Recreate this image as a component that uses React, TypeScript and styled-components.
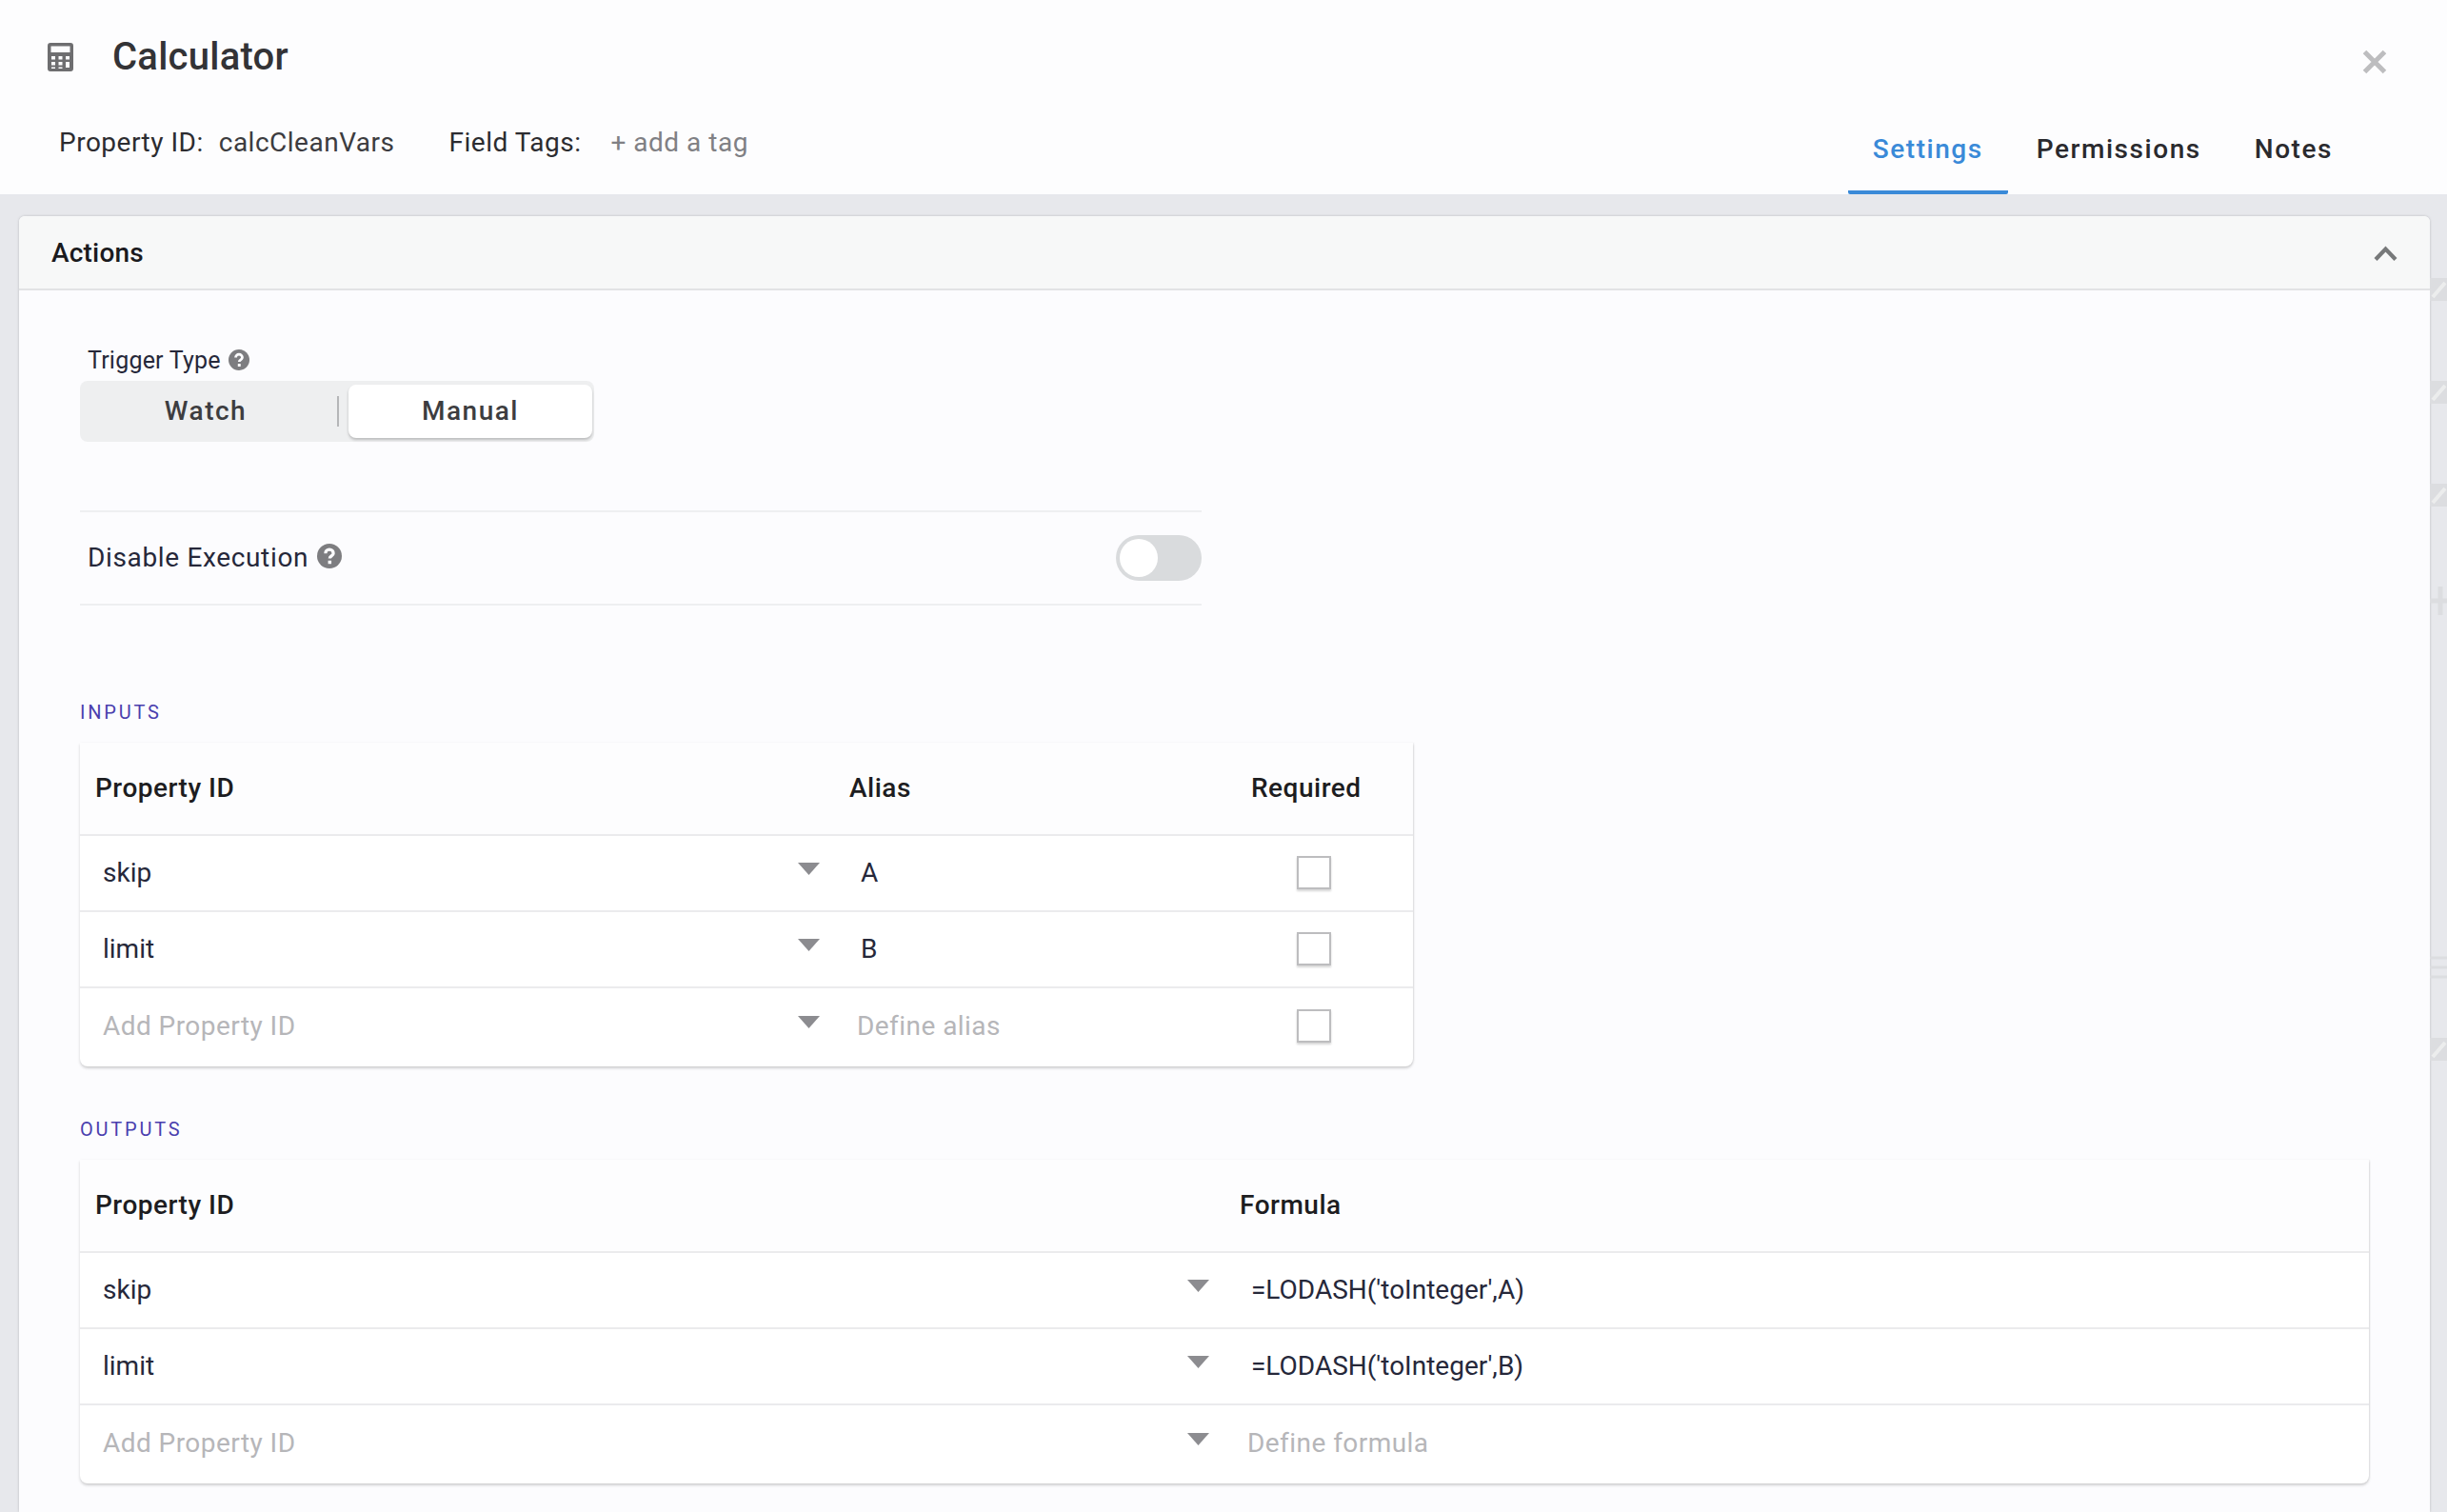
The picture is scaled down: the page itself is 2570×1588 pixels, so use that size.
import React from "react";
import styled, { createGlobalStyle } from "styled-components";

const GlobalStyle = createGlobalStyle`
  html, body {
    margin: 0;
    padding: 0;
    background: #e7e8ec;
  }
  body {
    font-family: Roboto, "Liberation Sans", sans-serif;
  }
`;

const CalculatorIcon = () => (
  <svg width="27" height="30" viewBox="0 0 27 30">
    <path
      fill="#6e6e70"
      fillRule="evenodd"
      d="M3 0h21a3 3 0 0 1 3 3v24a3 3 0 0 1-3 3H3a3 3 0 0 1-3-3V3a3 3 0 0 1 3-3zM3.5 3.5v6.5h20V3.5zM4 14v3.5h4V14zm7.5 0v3.5h4V14zM19 14v3.5h4V14zM4 20v3.5h4V20zm7.5 0v3.5h4V20zM19 20v6h4v-6zM4 25.5V27h4v-1.5zm7.5 0V27h4v-1.5z"
    />
  </svg>
);

const HelpIcon = ({ size }: { size: number }) => (
  <HelpSvg width={size} height={size} viewBox="0 0 24 24">
    <circle cx="12" cy="12" r="12" fill="#7d7d80" />
    <path
      d="M8.2 9.4a3.8 3.8 0 0 1 7.6 0c0 2.4-3.5 2.6-3.5 4.8"
      fill="none"
      stroke="#fcfcfe"
      strokeWidth="3"
    />
    <rect x="10.7" y="16.4" width="3.2" height="3.2" fill="#fcfcfe" />
  </HelpSvg>
);

const CloseIcon = () => (
  <CloseSvg width="26" height="26" viewBox="0 0 26 26">
    <path d="M2.5 2.5l21 21M23.5 2.5l-21 21" stroke="#bdbdbf" strokeWidth="5" fill="none" />
  </CloseSvg>
);

const ChevronUp = () => (
  <svg width="25" height="16" viewBox="0 0 25 16">
    <path d="M2 14.5L12.5 3.5 23 14.5" stroke="#77797a" strokeWidth="4.2" fill="none" />
  </svg>
);

const Caret = ({ $inset }: { $inset: number }) => (
  <CaretSvg $inset={$inset} width="23" height="13" viewBox="0 0 23 13">
    <path d="M0 0h23L11.5 13z" fill="#8c8c90" />
  </CaretSvg>
);

// faint icons of the page behind the modal, visible in the strip on the right
const GhostPencil = ({ $top }: { $top: number }) => (
  <GhostSvg $top={$top} width="18" height="24" viewBox="0 0 18 24">
    <rect width="18" height="24" fill="#dcdde0" />
    <path d="M3 20L16 5" stroke="#eceded" strokeWidth="4" />
  </GhostSvg>
);

const GhostMove = ({ $top }: { $top: number }) => (
  <GhostSvg $top={$top} width="18" height="38" viewBox="0 0 18 38">
    <path d="M11 4v30M0 19h18" stroke="#dcdde0" strokeWidth="5" />
  </GhostSvg>
);

const GhostMenu = ({ $top }: { $top: number }) => (
  <GhostSvg $top={$top} width="18" height="28" viewBox="0 0 18 28">
    <path d="M0 4h18M0 14h18M0 24h18" stroke="#dcdde0" strokeWidth="3" />
  </GhostSvg>
);

const inputRows = [
  { id: "skip", alias: "A" },
  { id: "limit", alias: "B" },
];

const outputRows = [
  { id: "skip", formula: "=LODASH('toInteger',A)" },
  { id: "limit", formula: "=LODASH('toInteger',B)" },
];

const App = () => {
  return (
    <>
      <GlobalStyle />
      <Page>
        <Header>
          <TopRow>
            <TitleGroup>
              <CalculatorIcon />
              <Title>Calculator</Title>
            </TitleGroup>
            <CloseIcon />
          </TopRow>
          <BottomRow>
            <Meta>
              <MetaLabel>Property ID:</MetaLabel>
              <MetaValue>calcCleanVars</MetaValue>
              <TagsLabel>Field Tags:</TagsLabel>
              <AddTag>+ add a tag</AddTag>
            </Meta>
            <Tabs>
              <Tab $active>Settings</Tab>
              <Tab>Permissions</Tab>
              <Tab>Notes</Tab>
            </Tabs>
          </BottomRow>
        </Header>

        <ContentRow>
          <Card>
            <CardHeader>
              <CardTitle>Actions</CardTitle>
              <ChevronUp />
            </CardHeader>
            <CardBody>
              <TriggerLabel>
                Trigger Type
                <TriggerHelp>
                  <HelpIcon size={22} />
                </TriggerHelp>
              </TriggerLabel>
              <Segmented>
                <Segment>Watch</Segment>
                <SegmentDivider />
                <Segment $selected>Manual</Segment>
              </Segmented>

              <DisableRow>
                <DisableLabel>
                  Disable Execution
                  <DisableHelp>
                    <HelpIcon size={26} />
                  </DisableHelp>
                </DisableLabel>
                <Toggle>
                  <Knob />
                </Toggle>
              </DisableRow>

              <SectionLabel $top={100}>INPUTS</SectionLabel>
              <Table $width={1400} $columns="792px 422px 186px">
                <HeaderCell>Property ID</HeaderCell>
                <HeaderCell>Alias</HeaderCell>
                <HeaderCell>Required</HeaderCell>
                {inputRows.map((row) => (
                  <React.Fragment key={row.id}>
                    <SelectCell>
                      {row.id}
                      <Caret $inset={15} />
                    </SelectCell>
                    <ValueCell>{row.alias}</ValueCell>
                    <CheckCell>
                      <Checkbox />
                    </CheckCell>
                  </React.Fragment>
                ))}
                <SelectCell $last $empty>
                  Add Property ID
                  <Caret $inset={15} />
                </SelectCell>
                <ValueCell $last $empty>
                  Define alias
                </ValueCell>
                <CheckCell $last>
                  <Checkbox />
                </CheckCell>
              </Table>

              <SectionLabel $top={54}>OUTPUTS</SectionLabel>
              <Table $width={2404} $columns="1202px 1202px">
                <HeaderCell>Property ID</HeaderCell>
                <HeaderCell>Formula</HeaderCell>
                {outputRows.map((row) => (
                  <React.Fragment key={row.id}>
                    <SelectCell>
                      {row.id}
                      <Caret $inset={16} />
                    </SelectCell>
                    <ValueCell>{row.formula}</ValueCell>
                  </React.Fragment>
                ))}
                <SelectCell $last $empty>
                  Add Property ID
                  <Caret $inset={16} />
                </SelectCell>
                <ValueCell $last $empty>
                  Define formula
                </ValueCell>
              </Table>
            </CardBody>
          </Card>
          <BackdropStrip>
            <GhostPencil $top={0} />
            <GhostPencil $top={84} />
            <GhostPencil $top={84} />
            <GhostMove $top={80} />
            <GhostMenu $top={352} />
            <GhostPencil $top={60} />
          </BackdropStrip>
        </ContentRow>
      </Page>
    </>
  );
};

const Page = styled.div`
  width: 2570px;
  height: 1588px;
  overflow: hidden;
  background: #e7e8ec;
  display: flex;
  flex-direction: column;
`;

const Header = styled.header`
  height: 204px;
  flex-shrink: 0;
  background: #fdfdfe;
  display: flex;
  flex-direction: column;
`;

const TopRow = styled.div`
  height: 116px;
  padding: 36px 63px 0 50px;
  box-sizing: border-box;
  display: flex;
  justify-content: space-between;
  align-items: flex-start;
`;

const TitleGroup = styled.div`
  display: flex;
  align-items: center;
  gap: 41px;
  height: 48px;
`;

const Title = styled.h1`
  margin: 0;
  font-size: 40px;
  line-height: 48px;
  font-weight: 500;
  letter-spacing: 0.25px;
  color: #333336;
`;

const CloseSvg = styled.svg`
  margin-top: 16px;
`;

const BottomRow = styled.div`
  flex: 1;
  padding: 0 94px 0 62px;
  display: flex;
  justify-content: space-between;
`;

const Meta = styled.div`
  display: flex;
  align-items: baseline;
  padding-top: 16px;
  font-size: 28px;
  line-height: 36px;
  letter-spacing: 0.5px;
`;

const MetaLabel = styled.span`
  color: #2c2c30;
`;

const MetaValue = styled.span`
  color: #3c3c40;
  margin-left: 16px;
`;

const TagsLabel = styled.span`
  color: #2c2c30;
  margin-left: 57px;
`;

const AddTag = styled.span`
  color: #808084;
  margin-left: 31px;
`;

const Tabs = styled.nav`
  display: flex;
  gap: 4px;
`;

const Tab = styled.div<{ $active?: boolean }>`
  padding: 23px 26px 0;
  box-sizing: border-box;
  height: 88px;
  font-size: 28px;
  line-height: 36px;
  font-weight: 500;
  letter-spacing: 1.55px;
  color: ${(p) => (p.$active ? "#3a8ad8" : "#2a2a2e")};
  border-bottom: 4px solid ${(p) => (p.$active ? "#3a8ad8" : "transparent")};
  border-radius: 0 0 2px 2px;
`;

const ContentRow = styled.div`
  flex: 1;
  min-height: 0;
  padding-left: 20px;
  display: flex;
`;

const Card = styled.section`
  width: 2532px;
  margin-top: 23px;
  border-radius: 6px 6px 0 0;
  background: #fcfcfe;
  box-shadow: 0 0 3px rgba(0, 0, 0, 0.2);
`;

const CardHeader = styled.div`
  height: 78px;
  box-sizing: border-box;
  padding: 1px 34px 0;
  background: #f7f8f8;
  border-bottom: 2px solid #e2e3e5;
  border-radius: 6px 6px 0 0;
  display: flex;
  align-items: center;
  justify-content: space-between;
`;

const CardTitle = styled.h2`
  margin: 0;
  font-size: 28px;
  font-weight: 500;
  letter-spacing: 0.2px;
  color: #1a1a1e;
`;

const BackdropStrip = styled.aside`
  width: 18px;
  padding-top: 88px;
  display: flex;
  flex-direction: column;
`;

const GhostSvg = styled.svg<{ $top: number }>`
  flex-shrink: 0;
  margin-top: ${(p) => p.$top}px;
`;

const CardBody = styled.div`
  padding: 59px 0 0 64px;
`;

const TriggerLabel = styled.div`
  margin-left: 8px;
  height: 36px;
  display: flex;
  align-items: flex-start;
  gap: 8px;
  font-size: 25px;
  line-height: 30px;
  letter-spacing: 0.2px;
  color: #26283a;
`;

const TriggerHelp = styled.span`
  margin-top: 3px;
  display: flex;
`;

const HelpSvg = styled.svg`
  flex-shrink: 0;
`;

const Segmented = styled.div`
  width: 540px;
  height: 64px;
  box-sizing: border-box;
  padding: 4px 2px 4px 0;
  background: #eeeff0;
  border-radius: 8px;
  display: flex;
  align-items: stretch;
`;

const Segment = styled.div<{ $selected?: boolean }>`
  flex: 1;
  display: flex;
  align-items: center;
  justify-content: center;
  font-size: 28px;
  font-weight: 500;
  letter-spacing: 1.5px;
  color: #3d3d40;
  border-radius: 8px;
  padding-bottom: 2px;
  padding-right: ${(p) => (p.$selected ? "0" : "6px")};
  ${(p) => p.$selected && "background: #fff; box-shadow: 0 2px 3px rgba(0, 0, 0, 0.22); flex: 0 0 256px;"}
`;

const SegmentDivider = styled.div`
  width: 2px;
  height: 32px;
  margin: 12px 10px 0 0;
  background: #b5b6b8;
`;

const DisableRow = styled.div`
  width: 1178px;
  height: 100px;
  margin-top: 72px;
  box-sizing: border-box;
  padding: 0 0 0 8px;
  border-top: 2px solid #eeeff1;
  border-bottom: 2px solid #eeeff1;
  display: flex;
  align-items: center;
  justify-content: space-between;
`;

const DisableLabel = styled.div`
  display: flex;
  align-items: center;
  gap: 9px;
  padding-bottom: 1px;
  font-size: 28px;
  letter-spacing: 0.65px;
  color: #26283a;
`;

const DisableHelp = styled.span`
  margin-bottom: 3px;
  display: flex;
`;

const Toggle = styled.div`
  width: 90px;
  height: 48px;
  box-sizing: border-box;
  padding: 4px;
  border-radius: 24px;
  background: #d9dbdd;
`;

const Knob = styled.div`
  width: 40px;
  height: 40px;
  border-radius: 50%;
  background: #fff;
`;

const SectionLabel = styled.div<{ $top: number }>`
  margin-top: ${(p) => p.$top}px;
  font-size: 20px;
  line-height: 24px;
  letter-spacing: 2.8px;
  color: #4a3fae;
`;

const Table = styled.div<{ $width: number; $columns: string }>`
  width: ${(p) => p.$width}px;
  margin-top: 20px;
  display: grid;
  grid-template-columns: ${(p) => p.$columns};
  grid-template-rows: 98px;
  grid-auto-rows: auto;
  background: #fff;
  border-radius: 0 0 8px 8px;
  box-shadow: 0 2px 3px rgba(0, 0, 0, 0.18), 1px 0 2px rgba(0, 0, 0, 0.06);
`;

const HeaderCell = styled.div`
  display: flex;
  align-items: center;
  padding: 0 0 2px 16px;
  background: #fdfdfe;
  border-bottom: 2px solid #ebebed;
  font-size: 28px;
  font-weight: 500;
  letter-spacing: 0.5px;
  color: #1d1d21;
`;

const BodyCell = styled.div<{ $last?: boolean; $empty?: boolean }>`
  display: flex;
  align-items: center;
  height: ${(p) => (p.$last ? "82px" : "80px")};
  box-sizing: border-box;
  padding-bottom: ${(p) => (p.$last ? "4px" : "2px")};
  border-bottom: ${(p) => (p.$last ? "none" : "2px solid #ebebed")};
  font-size: 28px;
  letter-spacing: ${(p) => (p.$empty ? "0.45px" : "0")};
  color: ${(p) => (p.$empty ? "#b6b6b9" : "#26283a")};
`;

const SelectCell = styled(BodyCell)`
  justify-content: space-between;
  padding-left: 24px;
`;

const ValueCell = styled(BodyCell)`
  padding-left: ${(p) => (p.$empty ? "24px" : "28px")};
`;

const CheckCell = styled(BodyCell)`
  padding-left: 64px;
`;

const CaretSvg = styled.svg<{ $inset: number }>`
  margin: 0 ${(p) => p.$inset}px 8px 0;
`;

const Checkbox = styled.div`
  width: 36px;
  height: 35px;
  box-sizing: border-box;
  border: 2px solid #bdbdbf;
  background: #fff;
  box-shadow: 0 2px 2px rgba(0, 0, 0, 0.16);
`;

export default App;
